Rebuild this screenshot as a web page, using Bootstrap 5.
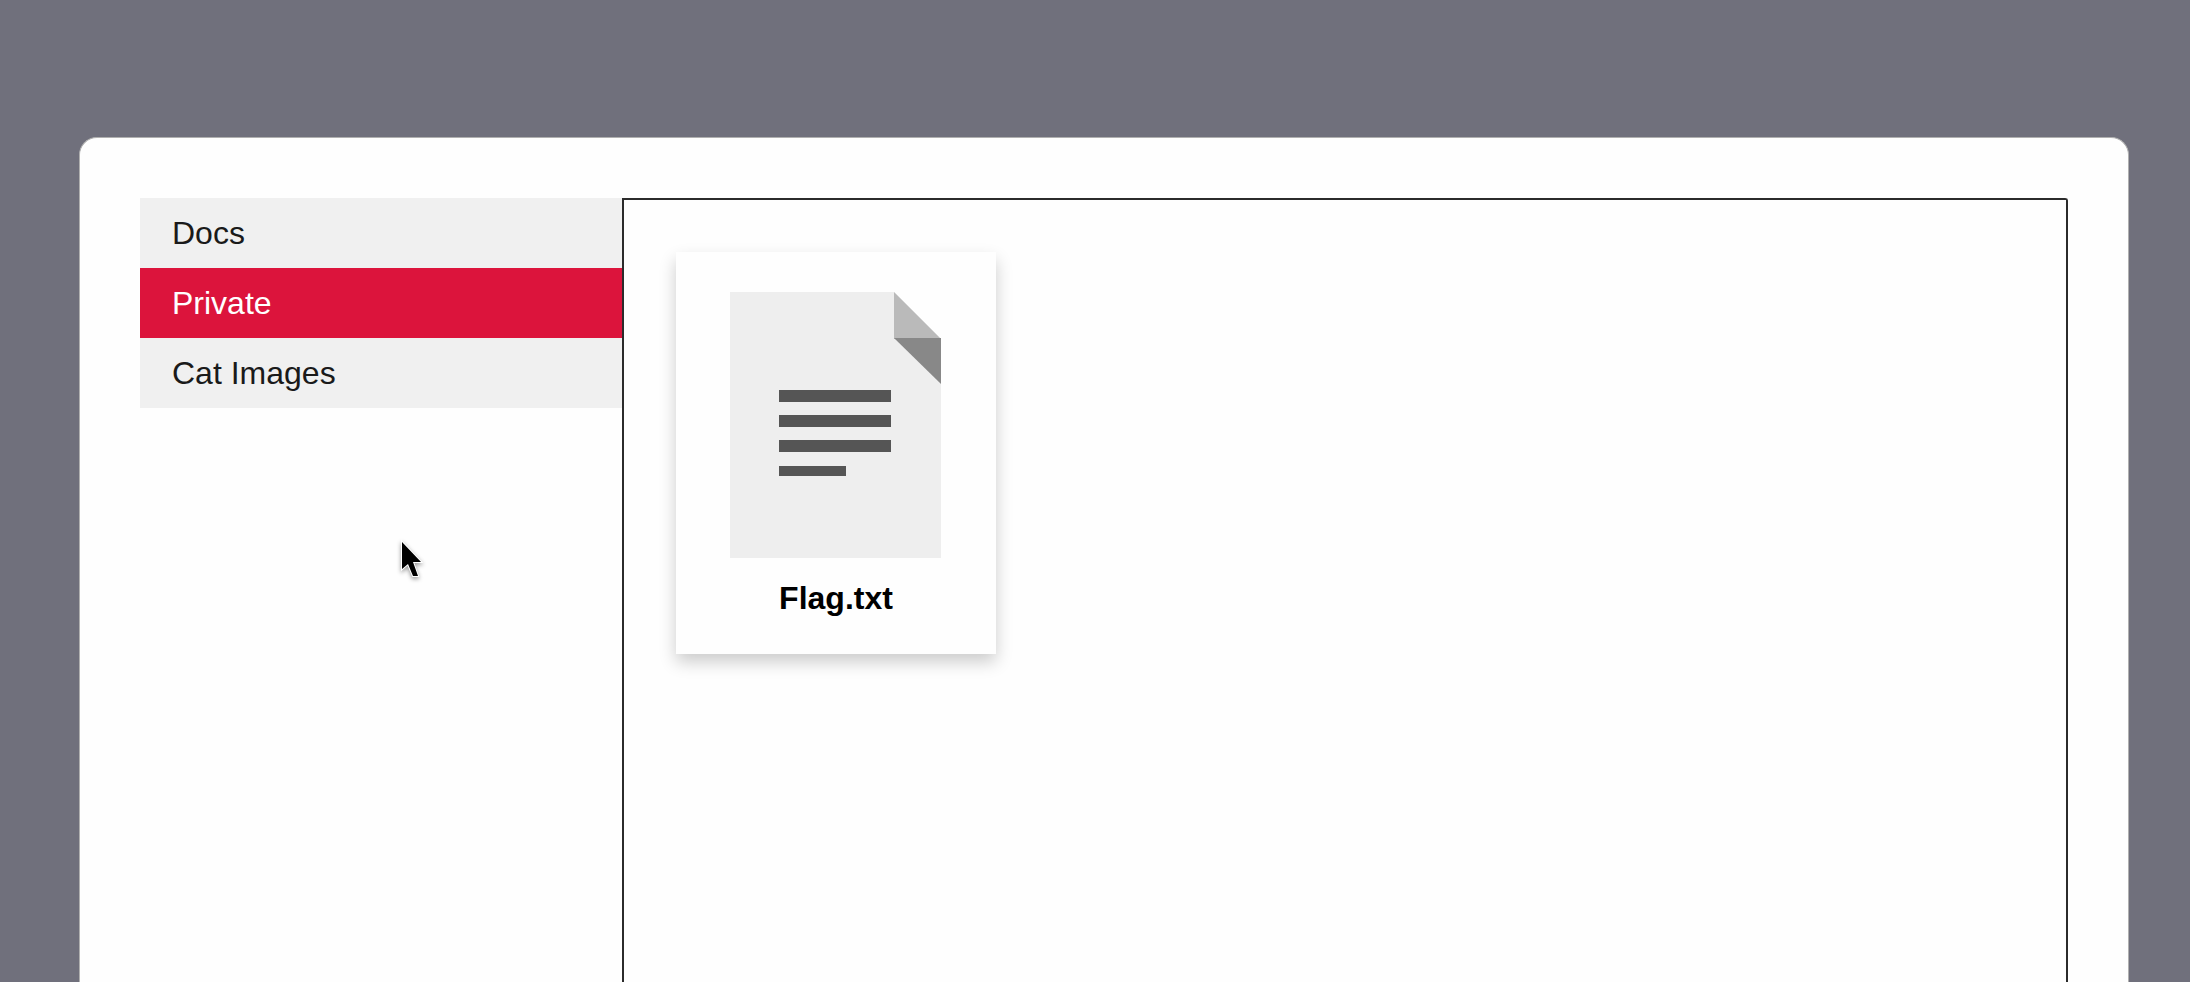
<!DOCTYPE html>
<html lang="en">
<head>
<meta charset="utf-8">
<meta name="viewport" content="width=device-width, initial-scale=1">
<title>Files</title>
<link href="https://cdn.jsdelivr.net/npm/bootstrap@5.3.0/dist/css/bootstrap.min.css" rel="stylesheet">
<style>
  body { background: #70707c; font-family: "Liberation Sans", Arial, sans-serif; font-size: 32px; line-height: 40px; color: #000; }
  .page { padding: 137px 61px 0 79px; }
  .window { background: #fefefe; border: 1px solid #b0b0b0; border-bottom: 0; border-radius: 18px 18px 0 0; padding: 60px 60px 0; }
  .tab { height: 70px; padding: 0 32px; border: 0; background: #f0f0f0; color: #1a1a1a; }
  .tab.active { background: #dc143c; color: #fff; }
  .pane { border: 2px solid #2b2b2b; border-bottom: 0; border-top-right-radius: 3px; padding: 52px; }
  .file { width: 320px; padding: 40px 0 36px; gap: 20px; color: #000; background: #fefefe; box-shadow: 0 8px 16px rgba(0, 0, 0, .2); }
  .file:hover { color: #000; }
  .pointer { position: absolute; left: 396px; top: 536px; pointer-events: none; }
</style>
</head>
<body>
<div class="page vh-100 d-flex overflow-hidden">
  <main class="window flex-grow-1 d-flex">
    <div class="row g-0 flex-grow-1">
      <nav class="col-3" aria-label="Folders">
        <button type="button" class="tab d-block w-100 text-start">Docs</button>
        <button type="button" class="tab active d-block w-100 text-start" aria-current="true">Private</button>
        <button type="button" class="tab d-block w-100 text-start">Cat Images</button>
      </nav>
      <section class="pane col-9">
        <a href="#" class="file d-flex flex-column align-items-center text-decoration-none fw-bold">
          <svg width="212" height="266" viewBox="0 0 212 266" aria-hidden="true">
            <path fill="#eee" d="M0 0h164l47 47v219H0z"/>
            <path fill="#bababa" d="M164 0l47 47h-47z"/>
            <path fill="#888" d="M164 46h47v46z"/>
            <path fill="#555" d="M49 98h112v12H49zM49 123h112v12H49zM49 148h112v12H49zM49 174h67v10H49z"/>
          </svg>
          <span>Flag.txt</span>
        </a>
      </section>
    </div>
  </main>
</div>
<svg class="pointer" width="32" height="48" viewBox="0 0 32 48" aria-hidden="true">
  <path d="M6 6v27l6-5 5 12h5l-5-14h8z" fill="#000" stroke="#fff" stroke-width="2" paint-order="stroke" style="filter: drop-shadow(0 2px 2px rgba(0,0,0,.4))"/>
</svg>
<script src="https://cdn.jsdelivr.net/npm/bootstrap@5.3.0/dist/js/bootstrap.bundle.min.js"></script>
</body>
</html>
